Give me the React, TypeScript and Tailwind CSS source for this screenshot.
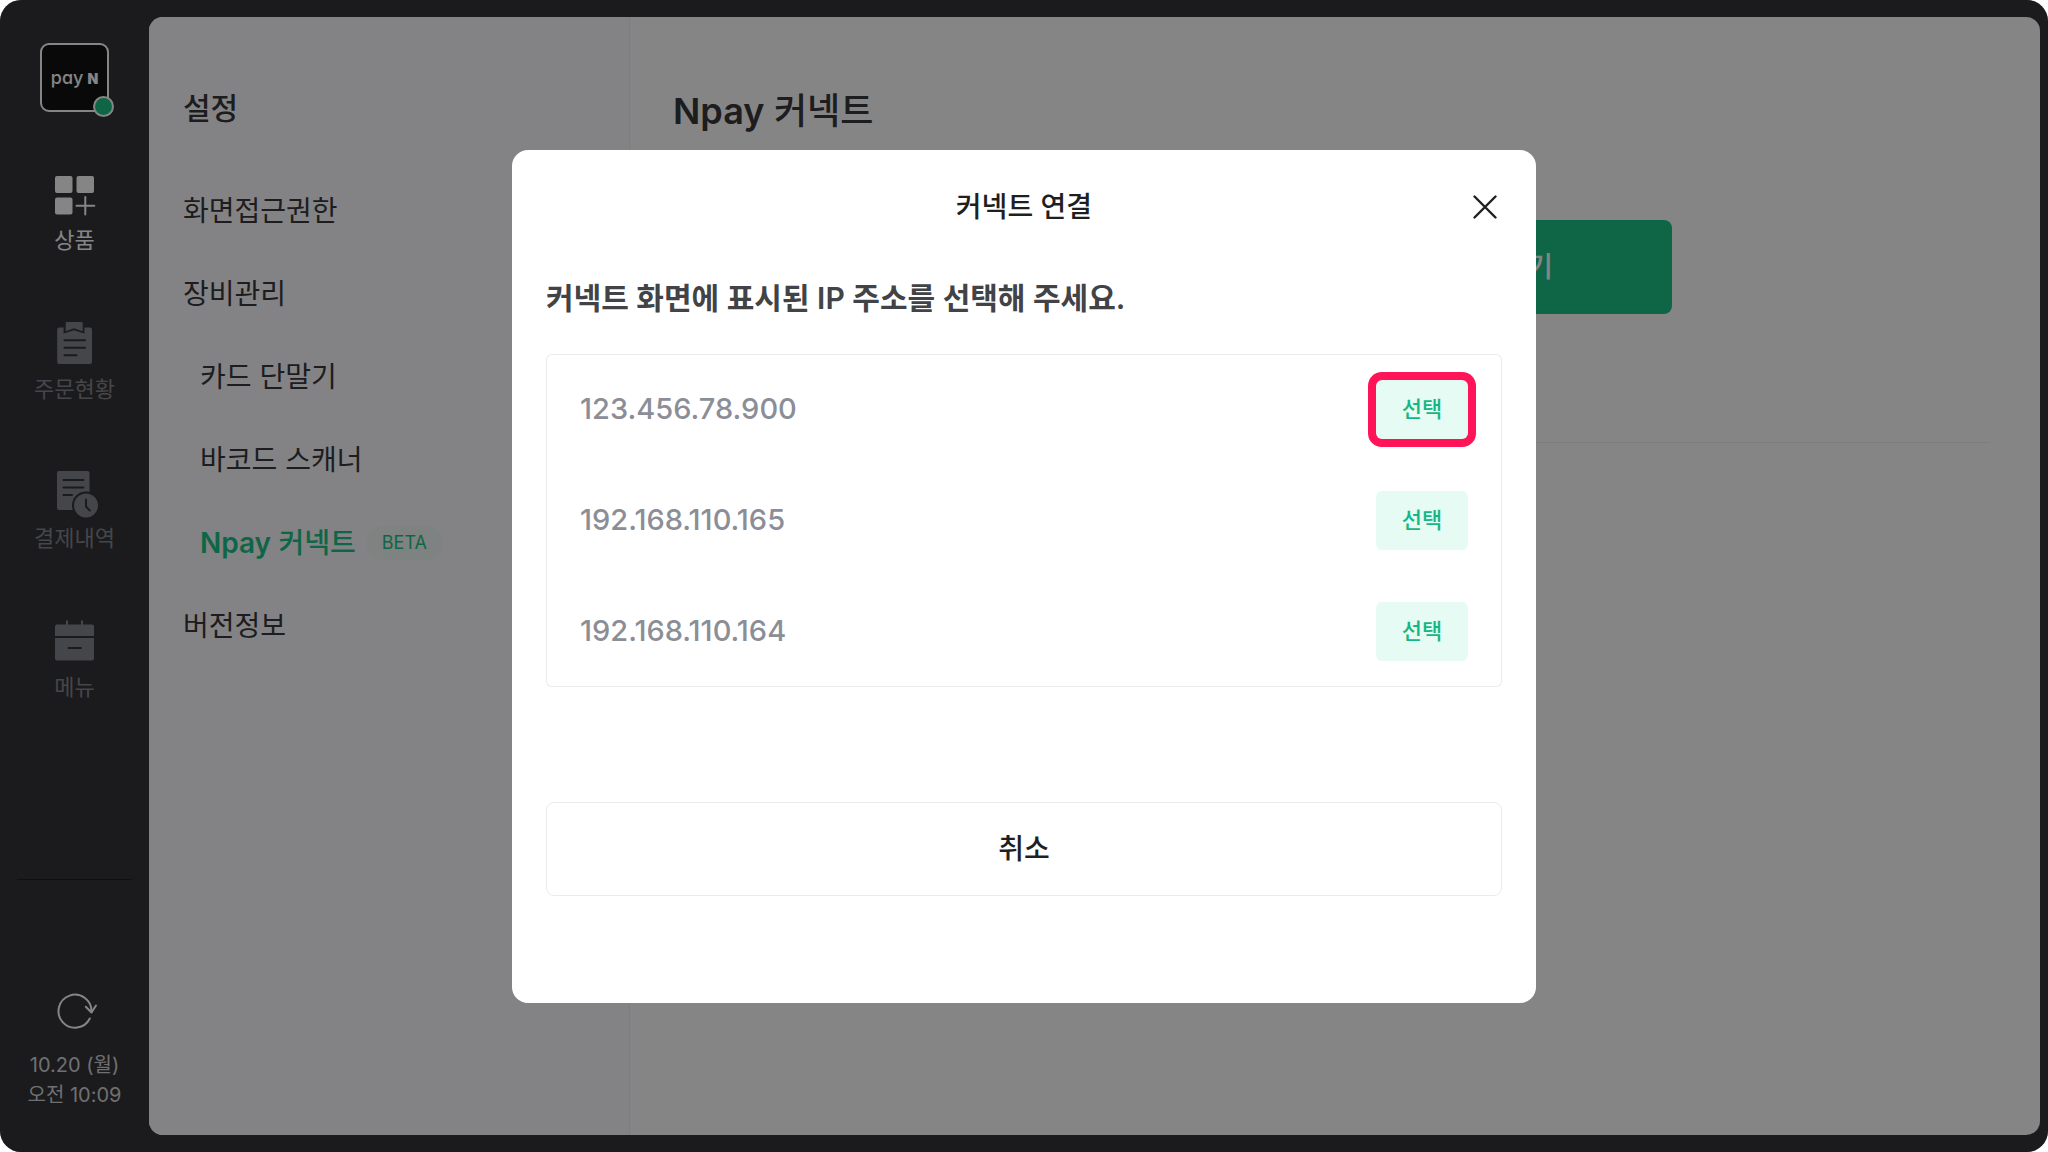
import { useState } from 'react';
import type { ReactNode } from 'react';

type NavItem = { key: string; label: string; icon: ReactNode };

const navItems: NavItem[] = [
  {
    key: 'products',
    label: '상품',
    icon: (
      <svg viewBox="1 0 48 48" className="size-12" fill="currentColor" aria-hidden="true">
        <rect x="5" y="4" width="17.5" height="17" rx="2" />
        <rect x="26.5" y="4" width="17.5" height="17" rx="2" />
        <rect x="5" y="25.5" width="17.5" height="17" rx="2" />
        <path d="M35.3 25v17.6M26.5 33.8h17.8" fill="none" stroke="currentColor" strokeWidth="2" strokeLinecap="round" />
      </svg>
    ),
  },
  {
    key: 'orders',
    label: '주문현황',
    icon: (
      <svg viewBox="1 0 48 48" className="size-12" fill="currentColor" aria-hidden="true">
        <path d="M9.2 6.5h4.4v6L24 9.2l10.4 3.3v-6H40a2 2 0 0 1 2 2V41a2 2 0 0 1-2 2H9.2a2 2 0 0 1-2-2V8.5a2 2 0 0 1 2-2Z" />
        <path d="M15.7 2a1 1 0 0 1 1-1h15a1 1 0 0 1 1 1v8.2L24 7.2l-8.3 3Z" />
        <path d="M14.5 19.3H35M14.5 26.8H35M14.5 34.3h12" fill="none" stroke="#343438" strokeWidth="2" strokeLinecap="round" />
      </svg>
    ),
  },
  {
    key: 'payments',
    label: '결제내역',
    icon: (
      <svg viewBox="1 0 48 48" className="size-12" fill="currentColor" aria-hidden="true">
        <rect x="7" y="1" width="32.5" height="39" rx="2" />
        <path d="M13.5 10h20M13.5 17.5h20M13.5 25h8.5" fill="none" stroke="#343438" strokeWidth="2" strokeLinecap="round" />
        <circle cx="36" cy="35.5" r="14" fill="#343438" />
        <circle cx="36" cy="35.5" r="12" />
        <path d="M36 29.5v7l3.8 4" fill="none" stroke="#343438" strokeWidth="2" strokeLinecap="round" />
      </svg>
    ),
  },
  {
    key: 'menu',
    label: '메뉴',
    icon: (
      <svg viewBox="1 0 48 48" className="size-12" fill="currentColor" aria-hidden="true">
        <path d="M17 1.5v6M32 1.5v6" fill="none" stroke="currentColor" strokeWidth="2" />
        <path d="M7 5.5h35a2 2 0 0 1 2 2V17H5V7.5a2 2 0 0 1 2-2Z" />
        <path d="M5 19h39v20.5a2 2 0 0 1-2 2H7a2 2 0 0 1-2-2Z" />
        <path d="M18.5 29H31" fill="none" stroke="#343438" strokeWidth="2" strokeLinecap="round" />
      </svg>
    ),
  },
];

const settingsItems = [
  { label: '화면접근권한', sub: false },
  { label: '장비관리', sub: false },
  { label: '카드 단말기', sub: true },
  { label: '바코드 스캐너', sub: true },
  { label: 'Npay 커넥트', sub: true, beta: true },
  { label: '버전정보', sub: false },
];

const addresses = ['123.456.78.900', '192.168.110.165', '192.168.110.164'];

// Product name, latin part set a step heavier than the Korean
function ConnectName() {
  return (
    <span>
      <span className="font-semibold">Npay</span> 커넥트
    </span>
  );
}

function Sidebar() {
  return (
    <aside className="flex w-[149px] shrink-0 flex-col items-center text-white">
      <div className="relative mt-[43px] flex size-[69px] items-center justify-center rounded-[9px] border-2 border-white bg-[#131313]">
        <span className="flex items-baseline gap-1 leading-none">
          <span className="text-lg leading-none font-medium [font-feature-settings:'cv11']">pay</span>
          <span className="text-sm leading-none font-black">N</span>
        </span>
        <span className="absolute -right-[7px] -bottom-[7px] size-[21px] rounded-full border-2 border-white bg-[#1dc487]" />
      </div>

      <nav className="mt-[60px] flex flex-col gap-[65px]">
        {navItems.map((item, i) => (
          <button
            key={item.key}
            type="button"
            className={`flex flex-col items-center gap-1 ${i === 0 ? 'text-white' : 'text-[#85868c]'}`}
          >
            {item.icon}
            <span className="text-[22px] leading-8">{item.label}</span>
          </button>
        ))}
      </nav>

      <div className="mt-auto flex w-full flex-col items-center pb-[42px]">
        <hr className="w-[115px] border-[#1f1f22]" />
        <button type="button" aria-label="새로고침" className="mt-[107px]">
          <svg viewBox="0 0 48 48" className="size-12" fill="none" stroke="currentColor" strokeWidth="2" strokeLinecap="round" strokeLinejoin="round" aria-hidden="true">
            <path d="M38.8 31.5A16.5 16.5 0 1 1 40.500 25" />
            <path d="M34.8 19.8l5.700 5.700 4.500-7" />
          </svg>
        </button>
        <time className="mt-[15px] text-center text-xl leading-[30px] text-[#d5d5d9]">
          10.20 (월)
          <br />
          오전 10:09
        </time>
      </div>
    </aside>
  );
}

function SettingsMenu() {
  return (
    <section className="w-[481px] shrink-0 border-r border-[#efeff2] bg-[#fcfcff] pl-[34px]">
      <h2 className="mt-[69px] text-3xl leading-[44px] font-medium">설정</h2>
      <ul className="mt-[39px]">
        {settingsItems.map((item) => (
          <li key={item.label} className={item.sub ? 'pl-[17px]' : ''}>
            <a
              href="#"
              className={`flex h-[83px] items-center gap-[10px] text-[28px] ${item.beta ? 'font-medium text-[#1dc487]' : ''}`}
            >
              {item.beta ? <ConnectName /> : item.label}
              {item.beta && (
                <span className="rounded-full bg-[#f2fcf9] px-4 text-lg leading-[34px] font-normal">BETA</span>
              )}
            </a>
          </li>
        ))}
      </ul>
    </section>
  );
}

function ConnectDialog({ onClose }: { onClose: () => void }) {
  return (
    <div className="absolute inset-0 flex items-center justify-center rounded-[21px] bg-black/48">
      <div role="dialog" aria-modal="true" aria-labelledby="dialog-title" className="w-1/2 rounded-2xl bg-white px-[34px] pb-[107px]">
        <header className="grid h-[115px] grid-cols-[24px_1fr_24px] items-center px-[5px] text-[#1e1f21]">
          <h2 id="dialog-title" className="col-start-2 text-center text-[28px] leading-10 font-medium">
            커넥트 연결
          </h2>
          <button type="button" aria-label="닫기" onClick={onClose}>
            <svg viewBox="0 0 24 24" className="size-6" fill="none" stroke="currentColor" strokeWidth="2.4" strokeLinecap="round" aria-hidden="true">
              <path d="M1.5 1.5l21 21M22.5 1.5l-21 21" />
            </svg>
          </button>
        </header>

        <p className="mt-[11px] text-3xl leading-[44px] font-semibold text-[#424346]">
          커넥트 화면에 표시된 IP 주소를 선택해 주세요.
        </p>

        <ul className="mt-[34px] rounded-md ring-1 ring-[#ebebeb] ring-inset">
          {addresses.map((address, i) => (
            <li key={address} className="flex h-[111px] items-center justify-between px-[34px]">
              <span className="text-[29px] font-medium text-[#8b8e96]">{address}</span>
              <button
                type="button"
                aria-label={`${address} 선택`}
                className={`h-[59px] w-[92px] rounded-md bg-[#e6fbf4] text-[22px] font-medium text-[#14b783] ${i === 0 ? 'ring-8 ring-[#ff1557]' : ''}`}
              >
                선택
              </button>
            </li>
          ))}
        </ul>

        <button
          type="button"
          onClick={onClose}
          className="mt-[115px] h-[94px] w-full rounded-lg border border-[#ebebeb] text-[28px] font-medium text-[#1e1f21]"
        >
          취소
        </button>
      </div>
    </div>
  );
}

export default function App() {
  const [open, setOpen] = useState(true);

  return (
    <div className="bg-white font-['Inter','Noto_Sans_CJK_KR',sans-serif]">
      <div className="relative flex min-h-screen rounded-[21px] bg-[#343438] text-[#39393c]">
        <Sidebar />
        <div className="my-[17px] mr-2 flex flex-1 overflow-hidden rounded-[14px] bg-white">
          <SettingsMenu />
          <main className="flex-1 pr-[50px] pl-[43px]">
            <h1 className="mt-[68px] text-4xl leading-[52px] font-medium">
              <ConnectName />
            </h1>
            <div className="mx-auto mt-[83px] flex max-w-[680px] justify-end">
              <button type="button" onClick={() => setOpen(true)} className="h-[94px] w-[340px] rounded-lg bg-[#1dc487] text-[28px] font-medium text-white">
                연결하기
              </button>
            </div>
            <hr className="mt-32 border-[#efefef]" />
          </main>
        </div>
        {open && <ConnectDialog onClose={() => setOpen(false)} />}
      </div>
    </div>
  );
}
